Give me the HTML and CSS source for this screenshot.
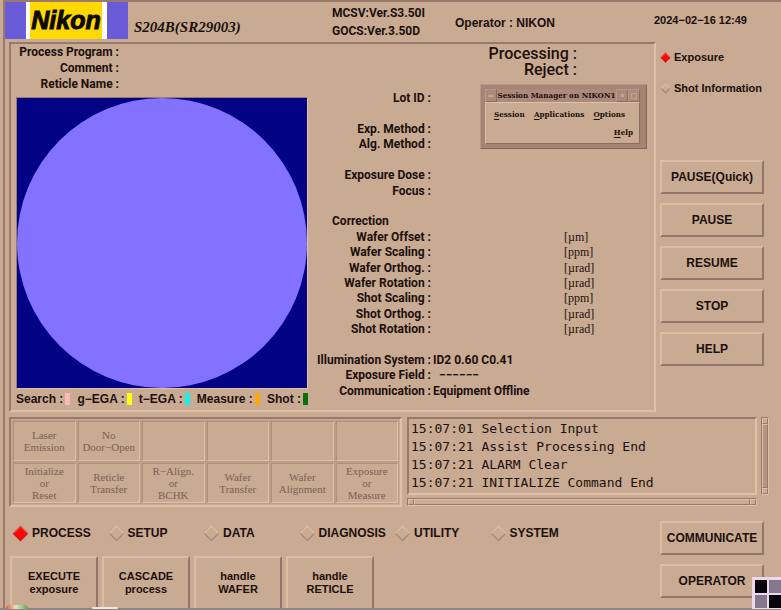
FILE: index.html
```html
<!DOCTYPE html>
<html lang="en">
<head>
<meta charset="utf-8">
<title>Nikon S204B console</title>
<link rel="stylesheet" href="styles.css">
</head>
<body>
<div class="console">
  <header class="header">
    <div class="logo"><span class="logo-name">Nikon</span></div>
    <h1 class="model">S204B(SR29003)</h1>
    <div class="versions"><div>MCSV:Ver.S3.50I</div><div>GOCS:Ver.3.50D</div></div>
    <div class="operator">Operator : NIKON</div>
    <time class="clock">2024−02−16 12:49</time>
  </header>

  <main class="main">
    <section class="panel">
      <div class="wafer">
        <div class="program">
          <div>Process Program :</div>
          <div>Comment :</div>
          <div>Reticle Name :</div>
        </div>
        <svg class="map" viewBox="0 0 290 290" role="img" aria-label="Wafer map">
          <rect width="290" height="290" fill="#020284"/>
          <circle cx="145" cy="145" r="145" fill="#8272ff"/>
        </svg>
        <div class="legend">
          <span>Search :<i class="key search"></i></span>
          <span>g−EGA :<i class="key gega"></i></span>
          <span>t−EGA :<i class="key tega"></i></span>
          <span>Measure :<i class="key measure"></i></span>
          <span>Shot :<i class="key shot"></i></span>
        </div>
      </div>
      <div class="info">
        <div class="counts"><div>Processing :</div><div>Reject :</div></div>
        <div class="details">
          <div class="row"><span class="label">Lot ID :</span></div>
          <div class="row"></div>
          <div class="row"><span class="label">Exp. Method :</span></div>
          <div class="row"><span class="label">Alg. Method :</span></div>
          <div class="row"></div>
          <div class="row"><span class="label">Exposure Dose :</span></div>
          <div class="row"><span class="label">Focus :</span></div>
          <div class="row"></div>
          <div class="row"><span class="title">Correction</span></div>
          <div class="row"><span class="label">Wafer Offset :</span><span></span><span class="unit">[µm]</span></div>
          <div class="row"><span class="label">Wafer Scaling :</span><span></span><span class="unit">[ppm]</span></div>
          <div class="row"><span class="label">Wafer Orthog. :</span><span></span><span class="unit">[µrad]</span></div>
          <div class="row"><span class="label">Wafer Rotation :</span><span></span><span class="unit">[µrad]</span></div>
          <div class="row"><span class="label">Shot Scaling :</span><span></span><span class="unit">[ppm]</span></div>
          <div class="row"><span class="label">Shot Orthog. :</span><span></span><span class="unit">[µrad]</span></div>
          <div class="row"><span class="label">Shot Rotation :</span><span></span><span class="unit">[µrad]</span></div>
          <div class="row"></div>
          <div class="row"><span class="label">Illumination System :</span><span>ID2 0.60 C0.41</span></div>
          <div class="row"><span class="label">Exposure Field :</span><span class="blank">−−−−−−</span></div>
          <div class="row"><span class="label">Communication :</span><span>Equipment Offline</span></div>
        </div>
        <section class="session">
          <div class="session-bar">
            <button class="box" aria-label="Window menu"><i class="dash"></i></button>
            <span class="session-title">Session Manager on NIKON1</span>
            <button class="box" aria-label="Minimize"><i class="dot"></i></button>
            <button class="box" aria-label="Maximize"><i class="square"></i></button>
          </div>
          <div class="session-menu">
            <button><u>S</u>ession</button>
            <button><u>A</u>pplications</button>
            <button><u>O</u>ptions</button>
            <button class="help"><u>H</u>elp</button>
          </div>
        </section>
      </div>
    </section>
    <aside class="side">
      <div class="views">
        <label class="radio small"><input type="radio" name="view" checked>Exposure</label>
        <label class="radio small"><input type="radio" name="view">Shot Information</label>
      </div>
      <div class="commands">
        <button class="button">PAUSE(Quick)</button>
        <button class="button">PAUSE</button>
        <button class="button">RESUME</button>
        <button class="button">STOP</button>
        <button class="button">HELP</button>
      </div>
    </aside>
  </main>

  <section class="monitor">
    <div class="states">
      <div class="state">Laser<br>Emission</div>
      <div class="state">No<br>Door−Open</div>
      <div class="state"></div>
      <div class="state"></div>
      <div class="state"></div>
      <div class="state"></div>
      <div class="state">Initialize<br>or<br>Reset</div>
      <div class="state">Reticle<br>Transfer</div>
      <div class="state">R−Align.<br>or<br>BCHK</div>
      <div class="state">Wafer<br>Transfer</div>
      <div class="state">Wafer<br>Alignment</div>
      <div class="state">Exposure<br>or<br>Measure</div>
    </div>
    <div class="log-area">
      <pre class="log">15:07:01 Selection Input
15:07:21 Assist Processing End
15:07:21 ALARM Clear
15:07:21 INITIALIZE Command End</pre>
      <div class="scroll vertical"><i class="up"></i><i class="thumb"></i><i class="down"></i></div>
      <div class="scroll horizontal"><i class="left"></i><i class="thumb"></i><i class="right"></i></div>
    </div>
  </section>

  <footer class="footer">
    <div class="menus">
      <div class="tabs">
        <label class="radio"><input type="radio" name="menu" checked>PROCESS</label>
        <label class="radio"><input type="radio" name="menu">SETUP</label>
        <label class="radio"><input type="radio" name="menu">DATA</label>
        <label class="radio"><input type="radio" name="menu">DIAGNOSIS</label>
        <label class="radio"><input type="radio" name="menu">UTILITY</label>
        <label class="radio"><input type="radio" name="menu">SYSTEM</label>
      </div>
      <div class="actions">
        <button class="button tall">EXECUTE<br>exposure</button>
        <button class="button tall">CASCADE<br>process</button>
        <button class="button tall">handle<br>WAFER</button>
        <button class="button tall">handle<br>RETICLE</button>
      </div>
    </div>
    <div class="commands">
      <button class="button">COMMUNICATE</button>
      <button class="button">OPERATOR</button>
    </div>
  </footer>
</div>
<div class="taskbar"><i class="globe"></i><i class="tab"></i></div>
<div class="pager"><i class="dark"></i><i></i><i></i><i class="dark"></i></div>
</body>
</html>
```
FILE: styles.css
```css
:root {
  --bg: #c9aa92;
  --light: #e0c0a8;
  --dark: #99796a;
  --ink: #1c100c;
}

* { box-sizing: border-box; }

body {
  margin: 0;
  min-height: 100vh;
  overflow: hidden;
  background: var(--bg);
  color: var(--ink);
  font: bold 12px/16px "Liberation Sans", Arial, sans-serif;
}

button {
  color: inherit;
  font: inherit;
  background: none;
  border: 0;
  padding: 0;
}

.console {
  height: 100vh;
  margin-left: 3px;
  border-left: 2px solid var(--dark);
  border-top: 2px solid var(--dark);
  overflow: hidden;
}

/* Header */
.header {
  display: grid;
  grid-template-columns: 123px 204px 123px 1fr 127px;
  align-items: center;
  height: 40px;
}

.logo {
  align-self: start;
  display: grid;
  height: 37px;
  padding: 0 21px;
  background: #6a5bd8;
}

.logo-name {
  background: #ffd900;
  border: solid #fff;
  border-width: 0 5px 0 4px;
  color: #0c0a00;
  font-size: 25px;
  font-style: italic;
  line-height: 36px;
  text-align: center;
  -webkit-text-stroke: 1px #0c0a00;
}

.model {
  margin: 0;
  padding: 10px 0 0 6px;
  font: italic bold 15px/20px "Liberation Serif", serif;
}

.versions { line-height: 18px; }
.operator { padding-top: 2px; }
.clock { padding-bottom: 4px; font-size: 11px; }

.versions,
.program,
.details {
  font-family: Roboto, "Liberation Sans", sans-serif;
}

/* Upper area */
.main,
.footer {
  display: grid;
  grid-template-columns: 1fr 104px;
  gap: 4px;
  padding: 0 17px 0 4px;
}

.panel {
  display: grid;
  grid-template-columns: 292px 1fr;
  padding: 0 5px 3px;
  border: 2px solid;
  border-color: var(--dark) var(--light) var(--light) var(--dark);
}

.program {
  width: 103px;
  height: 53px;
  text-align: right;
  white-space: nowrap;
}

.map {
  display: block;
  width: 100%;
  border: 1px solid;
  border-color: var(--dark) var(--light) var(--light) var(--dark);
}

.legend {
  display: flex;
  justify-content: space-between;
  padding-top: 2px;
}

.legend span { display: flex; align-items: center; gap: 2px; }
.key { width: 5px; height: 12px; }
.search { background: #ffb6b6; }
.gega { background: #ffff10; }
.tega { background: #18f0f0; }
.measure { background: #ffa510; }
.shot { background: #087008; }

.info {
  position: relative;
  display: grid;
  grid-template-rows: 47px 1fr;
  padding-bottom: 8px;
}

.counts {
  padding: 2px 72px 0 0;
  text-align: right;
  font: 500 16px/16px Roboto, "Liberation Sans", sans-serif;
}

.details {
  display: grid;
  grid-template-rows: repeat(20, 1fr);
}

.row {
  display: grid;
  grid-template-columns: 123px 129px 1fr;
  gap: 2px;
  align-items: center;
  line-height: 15px;
  white-space: nowrap;
}

.label { justify-self: end; }
.title { padding-left: 24px; }
.blank { padding-left: 6px; }
.unit { font: 12px/15px "Liberation Serif", serif; }

/* Session manager window */
.session {
  position: absolute;
  top: 40px;
  right: 2px;
  width: 167px;
  height: 65px;
  padding: 4px 6px 5px 4px;
  background: #a58475;
  border: 1px solid;
  border-color: #b59787 #85665a #85665a #b59787;
  font: bold 9px/12px "DejaVu Serif Condensed", "DejaVu Serif", serif;
}

.session-bar {
  display: grid;
  grid-template-columns: 12px 1fr 12px 12px;
  height: 13px;
  background: #ab8a7b;
}

.session-title {
  overflow: hidden;
  text-align: center;
  white-space: nowrap;
  font-size: 8px;
}

.box {
  display: grid;
  place-items: center;
  border: 1px solid;
  border-color: #b89b8c #8c6c60 #8c6c60 #b89b8c;
}

.dash { width: 6px; height: 2px; background: #c0a494; }
.dot { width: 3px; height: 3px; background: #bfa393; }
.square { width: 6px; height: 6px; border: 1px solid #bfa393; }

.session-menu {
  display: grid;
  grid-template-columns: auto auto auto;
  justify-content: space-between;
  height: 42px;
  padding: 5px 14px 5px 8px;
  row-gap: 6px;
  background: var(--bg);
  border: 1px solid;
  border-color: var(--light) #8c6c60 #8c6c60 var(--light);
  font-size: 8px;
}

.session-menu u { text-underline-offset: 2px; }
.help { grid-column: 3; justify-self: end; margin-right: -8px; }

/* Radio buttons with diamond markers */
.radio {
  display: flex;
  align-items: center;
  gap: 6px;
  white-space: nowrap;
}

.radio input {
  appearance: none;
  flex: none;
  width: 11px;
  height: 11px;
  margin: 0 0 0 2px;
  border: 1px solid;
  border-color: var(--light) #a08070 #a08070 var(--light);
  transform: rotate(45deg);
}

.radio input:checked { background: #f80808; border-color: #e05040 #d01010 #d01010 #e05040; }
.radio.small { gap: 5px; font-size: 11px; }
.radio.small input { width: 7px; height: 7px; }

.views {
  display: grid;
  gap: 15px;
  height: 118px;
  align-content: start;
  padding-top: 7px;
}

.commands {
  display: grid;
  gap: 9px;
  align-content: start;
}

.button {
  height: 34px;
  border: 2px solid;
  border-color: #dbbca4 #94756a #94756a #dbbca4;
}

.tall {
  width: 88px;
  height: 54px;
  font-size: 11px;
  line-height: 13px;
}

/* Machine states and log */
.monitor {
  display: grid;
  grid-template-columns: 393px 1fr;
  gap: 5px;
  padding: 5px 12px 0 4px;
}

.states {
  display: grid;
  grid-template-columns: repeat(6, 1fr);
  grid-template-rows: 40px 40px;
  gap: 2px;
  padding: 2px;
  border: 2px solid;
  border-color: var(--dark) var(--light) var(--light) var(--dark);
}

.state {
  display: grid;
  place-content: center;
  border: 1px solid;
  border-color: #b08f7e var(--light) var(--light) #b08f7e;
  outline: 1px solid #bd9d87;
  color: #7c6052;
  text-align: center;
  white-space: nowrap;
  font: 11px/12px "Liberation Serif", serif;
}

.log-area {
  display: grid;
  grid-template-columns: 1fr 8px;
  grid-template-rows: 78px 8px;
  gap: 3px 4px;
}

.log {
  margin: 0;
  padding: 1px 2px;
  border: 2px solid;
  border-color: var(--dark) var(--light) var(--light) var(--dark);
  font: 13px/18px "DejaVu Sans Mono", monospace;
}

.scroll {
  display: flex;
  justify-content: space-between;
  border: 1px solid;
  border-color: var(--dark) var(--light) var(--light) var(--dark);
}

.vertical { flex-direction: column; }
.scroll i { flex: none; width: 6px; height: 6px; border: 1px solid; border-color: var(--light) var(--dark) var(--dark) var(--light); }
.scroll .thumb { flex: 1; }
.vertical .thumb { background: #b59480; }

/* Bottom menu */
.footer { padding-top: 14px; }

.tabs {
  display: grid;
  grid-template-columns: repeat(6, 1fr);
  height: 35px;
  padding: 4px 70px 0 4px;
  align-items: start;
}

.actions { display: flex; gap: 4px; padding-left: 1px; }

.taskbar {
  position: fixed;
  inset: auto 0 0 0;
  height: 2px;
  background: #8e8582;
}

.globe,
.tab {
  position: absolute;
  bottom: 1px;
  left: 6px;
  width: 22px;
  height: 4px;
  border-radius: 11px 11px 0 0;
  background: linear-gradient(90deg, #d86040, #e8e0c8 45%, #58a850);
}

.tab { left: 92px; width: 26px; height: 2px; border-radius: 2px; background: #f2e6da; }

.pager {
  position: fixed;
  right: 0;
  bottom: 1px;
  display: grid;
  grid-template-columns: 12px 12px;
  grid-template-rows: 13px 13px;
  gap: 2px;
  padding: 3px 0 1px 3px;
  background: #ecd9ec;
}

.pager i { background: #85788c; }
.pager .dark { background: #08040c; }
```
